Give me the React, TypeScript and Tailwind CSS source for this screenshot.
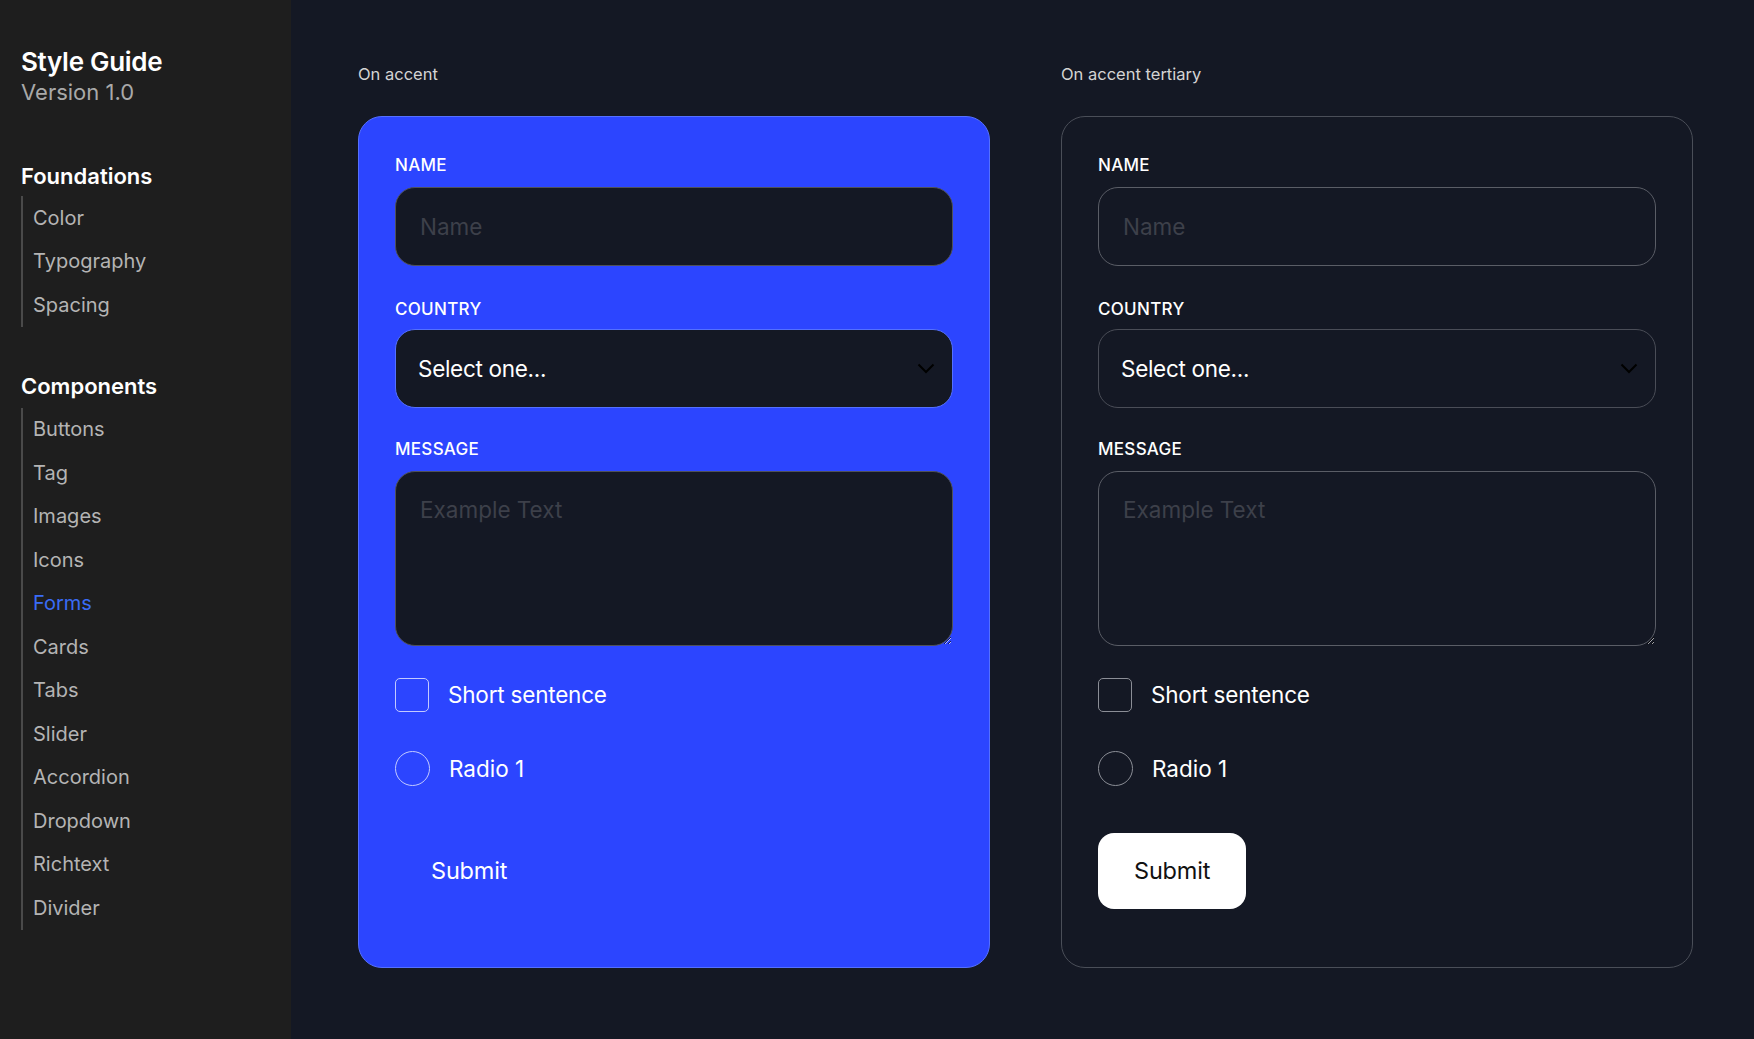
import React from 'react';

const foundations = ['Color', 'Typography', 'Spacing'];
const components = [
  'Buttons',
  'Tag',
  'Images',
  'Icons',
  'Forms',
  'Cards',
  'Tabs',
  'Slider',
  'Accordion',
  'Dropdown',
  'Richtext',
  'Divider',
];

function Sidebar() {
  return (
    <aside className="w-[291px] shrink-0 bg-[#1e1e1e] pl-[21px] pt-[46px]">
      <h1 className="text-[26px] leading-[32px] font-semibold text-white tracking-[-0.3px]">Style Guide</h1>
      <p className="text-[22px] leading-[28px] text-[#a9a9a9]">Version 1.0</p>

      <h2 className="mt-[56px] text-[22px] leading-[28px] font-semibold text-white">Foundations</h2>
      <ul className="mt-[6px] border-l-2 border-[#4a4a4a]">
        {foundations.map((item) => (
          <li key={item} className="pl-[10px] h-[43.5px] flex items-center text-[20px] text-[#b4b4b4]">
            {item}
          </li>
        ))}
      </ul>

      <h2 className="mt-[45px] text-[22px] leading-[28px] font-semibold text-white">Components</h2>
      <ul className="mt-[8px] border-l-2 border-[#4a4a4a]">
        {components.map((item) => (
          <li
            key={item}
            className={`pl-[10px] h-[43.5px] flex items-center text-[20px] ${
              item === 'Forms' ? 'text-[#3a6cf6]' : 'text-[#b4b4b4]'
            }`}
          >
            {item}
          </li>
        ))}
      </ul>
    </aside>
  );
}

function Chevron() {
  return (
    <svg width="18" height="11" viewBox="0 0 18 11" fill="none">
      <path d="M1.5 1.5L9 9L16.5 1.5" stroke="#000" strokeWidth="2" />
    </svg>
  );
}

interface FormCardProps {
  title: string;
  accent?: boolean;
}

function FormCard({ title, accent }: FormCardProps) {
  const inputBorder = accent ? 'border-[#4f5158]' : 'border-[#5a5d66]';
  const selectBorder = accent ? 'border-[#5470ff]' : 'border-[#4a4d57]';
  const boxBorder = accent ? 'border-[#c3caff]' : 'border-[#8b8e96]';

  return (
    <div className="flex-1 min-w-0">
      <p className="text-[16.5px] leading-[24px] text-[#d4d4d4]">{title}</p>

      <div
        className={`mt-[30px] h-[852px] rounded-3xl border px-9 pt-[38px] ${
          accent ? 'bg-[#2c45ff] border-[#5570ff]' : 'bg-[#141824] border-[#4a4e58]'
        }`}
      >
        <label className="block text-[17px] leading-[20px] font-medium tracking-[0.3px] text-white">NAME</label>
        <input
          placeholder="Name"
          className={`mt-[12px] block w-full h-[79px] rounded-[20px] border ${inputBorder} bg-[#141824] pl-[24px] text-[22.5px] text-white placeholder:text-[#3d404a] outline-none`}
        />

        <label className="mt-[33px] block text-[17px] leading-[20px] font-medium tracking-[0.3px] text-white">
          COUNTRY
        </label>
        <div
          className={`mt-[10px] flex items-center justify-between w-full h-[79px] rounded-[20px] border ${selectBorder} bg-[#141824] pl-[22px] pr-[17px]`}
        >
          <span className="text-[22.5px] tracking-[-0.3px] text-white">Select one...</span>
          <Chevron />
        </div>

        <label className="mt-[31px] block text-[17px] leading-[20px] font-medium tracking-[0.3px] text-white">
          MESSAGE
        </label>
        <textarea
          placeholder="Example Text"
          className={`mt-[12px] block w-full h-[175px] rounded-[20px] border ${inputBorder} bg-[#141824] pl-[24px] pt-[23px] text-[22.5px] leading-[30px] text-white placeholder:text-[#3d404a] outline-none`}
        />

        <div className="mt-[32px] flex items-center gap-[19px]">
          <span className={`w-[34px] h-[34px] rounded-[5px] border ${boxBorder}`} />
          <span className="text-[22.5px] tracking-[-0.2px] text-white">Short sentence</span>
        </div>

        <div className="mt-[39px] flex items-center gap-[19px]">
          <span className={`w-[35px] h-[35px] rounded-full border ${boxBorder}`} />
          <span className="text-[22.5px] text-white">Radio 1</span>
        </div>

        <button
          className={`mt-[47px] h-[76px] px-9 rounded-2xl text-[23.5px] tracking-[-0.2px] ${
            accent ? 'bg-transparent text-white' : 'bg-white text-[#111]'
          }`}
        >
          Submit
        </button>
      </div>
    </div>
  );
}

export default function App() {
  return (
    <div className="flex h-[1039px] w-full bg-[#141824] font-['Inter',sans-serif]">
      <Sidebar />
      <main className="flex-1 flex gap-[71px] pl-[67px] pr-[61px] pt-[62px]">
        <FormCard title="On accent" accent />
        <FormCard title="On accent tertiary" />
      </main>
    </div>
  );
}
